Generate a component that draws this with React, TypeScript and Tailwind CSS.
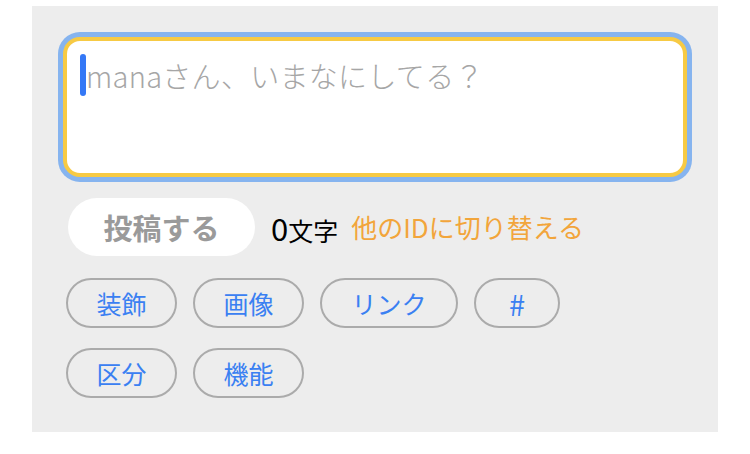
import React from "react";

const font = { fontFamily: '"Noto Sans CJK JP", "Noto Sans", sans-serif' };

function Tag({ label, w, size = "text-[25px]" }: { label: string; w: string; size?: string }) {
  return (
    <div
      className={`${w} ${size} h-[50px] rounded-full border-2 border-[#ababab] flex items-center justify-center leading-none text-[#3a80f2]`}
    >
      {label}
    </div>
  );
}

export default function App() {
  return (
    <div className="w-[750px] h-[454px] bg-white pt-[6px]" style={font}>
      <div className="mx-[32px] bg-[#ededed] px-[26px] pt-[26px] pb-[34px]">
        <div className="h-[150px] rounded-[22px] bg-[#86b4ef] p-[5px]">
          <div className="h-full rounded-[17px] border-4 border-[#f7ca44] bg-white pl-[13px] pt-[13px]">
            <div className="flex items-center h-[42px]">
              <span className="inline-block w-[6px] h-[42px] rounded-full bg-[#3478f6]" />
              <span className="text-[29px] leading-[42px] tracking-[0.3px] font-light text-[#a6a6a6] whitespace-nowrap">
                manaさん、いまなにしてる？
              </span>
            </div>
          </div>
        </div>
        <div className="mt-[16px] flex items-center">
          <div className="ml-[10px] w-[187px] h-[58px] rounded-full bg-white flex items-center justify-center text-[29px] font-bold text-[#9a9a9a] leading-none">
            投稿する
          </div>
          <div className="ml-[16px] flex items-baseline text-black leading-none">
            <span className="text-[31px]">0</span>
            <span className="text-[25px]">文字</span>
          </div>
          <div className="ml-[13px] text-[26px] text-[#f2a53b] leading-none whitespace-nowrap">
            他のIDに切り替える
          </div>
        </div>
        <div className="mt-[22px] ml-[8px] flex flex-col gap-[20px]">
          <div className="flex gap-[16px]">
            <Tag label="装飾" w="w-[111px]" />
            <Tag label="画像" w="w-[111px]" />
            <Tag label="リンク" w="w-[138px]" />
            <Tag label="#" w="w-[86px]" size="text-[29px]" />
          </div>
          <div className="flex gap-[16px]">
            <Tag label="区分" w="w-[111px]" />
            <Tag label="機能" w="w-[111px]" />
          </div>
        </div>
      </div>
    </div>
  );
}
